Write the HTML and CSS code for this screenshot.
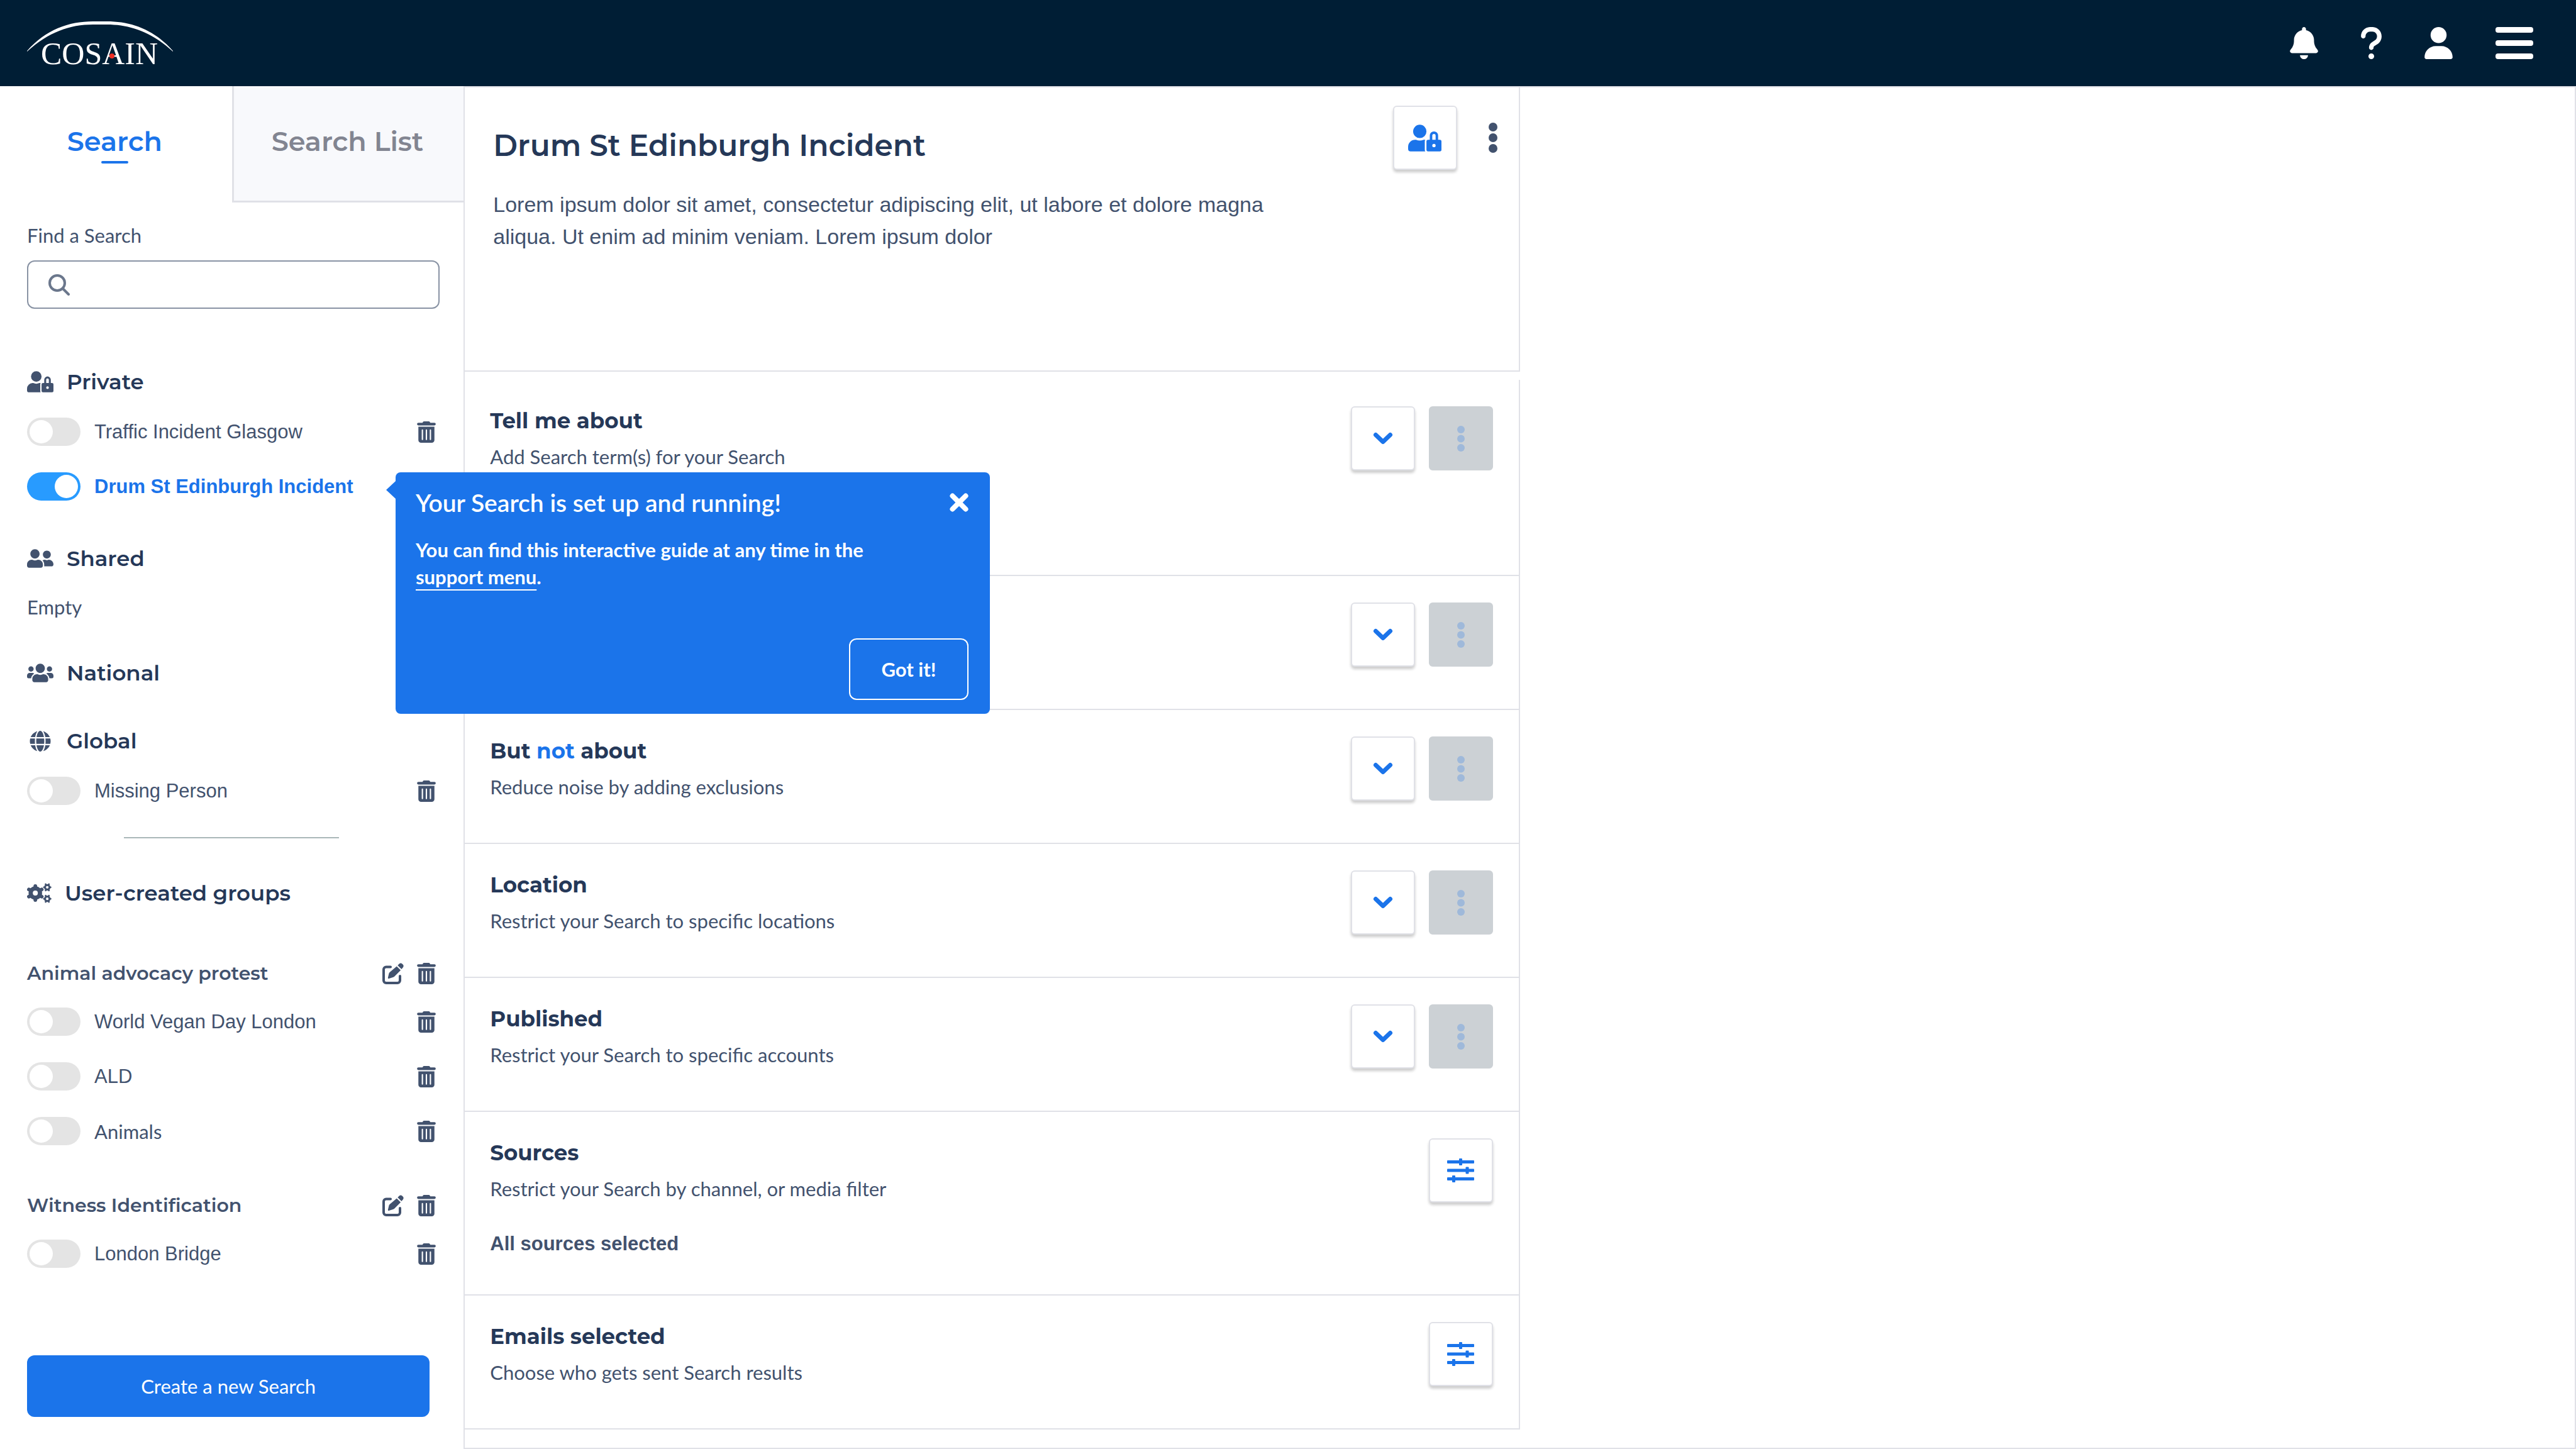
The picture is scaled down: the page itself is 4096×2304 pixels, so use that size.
FILE: index.html
```html
<!DOCTYPE html>
<html lang="en">
<head>
<meta charset="utf-8">
<title>Cosain</title>
<link rel="stylesheet" href="styles.css">
</head>
<body>
<svg class="sprite" aria-hidden="true">
  <symbol id="bell" viewBox="0 0 448 512"><path d="M224 0c-17.7 0-32 14.3-32 32l0 19.2C119 66 64 130.6 64 208l0 18.8c0 47-17.3 92.4-48.5 127.6l-7.4 8.3c-8.400 9.400-10.400 22.900-5.300 34.400S19.400 416 32 416l384 0c12.600 0 24-7.400 29.200-18.900s3.100-25-5.300-34.400l-7.400-8.300C401.300 319.200 384 273.900 384 226.800l0-18.800c0-77.400-55-142-128-156.800L256 32c0-17.700-14.300-32-32-32zm45.300 493.300c12-12 18.700-28.300 18.700-45.300l-64 0-64 0c0 17 6.700 33.300 18.700 45.300s28.300 18.700 45.300 18.700s33.300-6.700 45.300-18.700z"/></symbol>
  <symbol id="question" viewBox="16 32 288 448"><path d="M80 160c0-35.300 28.700-64 64-64l32 0c35.300 0 64 28.700 64 64l0 3.600c0 21.800-11.100 42.100-29.400 53.800l-42.200 27.100c-25.200 16.200-40.400 44.100-40.400 74l0 1.400c0 17.700 14.300 32 32 32s32-14.300 32-32l0-1.400c0-8.200 4.200-15.800 11-20.200l42.200-27.100c36.600-23.600 58.800-64.100 58.800-107.700l0-3.600c0-70.700-57.300-128-128-128l-32 0C73.300 32 16 89.300 16 160c0 17.700 14.300 32 32 32s32-14.300 32-32zm80 320a40 40 0 1 0 0-80 40 40 0 1 0 0 80z"/></symbol>
  <symbol id="user" viewBox="0 0 448 512"><path d="M224 256A128 128 0 1 0 224 0a128 128 0 1 0 0 256zm-45.700 48C79.800 304 0 383.800 0 482.300C0 498.700 13.300 512 29.700 512l388.600 0c16.400 0 29.700-13.300 29.700-29.700C448 383.800 368.200 304 269.700 304l-91.400 0z"/></symbol>
  <symbol id="menu" viewBox="0 0 60 51"><rect width="60" height="9" rx="4"/><rect y="21" width="60" height="9" rx="4"/><rect y="42" width="60" height="9" rx="4"/></symbol>
  <symbol id="search" viewBox="0 0 34 34"><g fill="none" stroke="currentColor" stroke-width="4" stroke-linecap="round"><circle cx="14" cy="14" r="12"/><path d="M23 23l9 9"/></g></symbol>
  <symbol id="user-lock" viewBox="0 0 640 512"><path d="M224 256A128 128 0 1 0 96 128a128 128 0 0 0 128 128zm96 64a63.080 63.080 0 0 1 8.100-30.500c-4.800-.5-9.500-1.500-14.500-1.500h-16.700a174.080 174.080 0 0 1-145.800 0h-16.700A134.430 134.430 0 0 0 0 422.400V464a48 48 0 0 0 48 48h280.900a63.540 63.540 0 0 1-8.900-32zm288-32h-32v-80a80 80 0 0 0-160 0v80h-32a32 32 0 0 0-32 32v160a32 32 0 0 0 32 32h224a32 32 0 0 0 32-32V320a32 32 0 0 0-32-32zM496 432a32 32 0 1 1 32-32 32 32 0 0 1-32 32zm32-144h-64v-80a32 32 0 0 1 64 0z"/></symbol>
  <symbol id="friends" viewBox="0 32 640 448"><path d="M192 256c61.900 0 112-50.100 112-112S253.900 32 192 32 80 82.100 80 144s50.100 112 112 112zm76.800 32h-8.300c-20.800 10-43.900 16-68.500 16s-47.600-6-68.500-16h-8.300C51.600 288 0 339.600 0 403.200V432c0 26.500 21.500 48 48 48h288c26.500 0 48-21.500 48-48v-28.800c0-63.600-51.600-115.200-115.200-115.200zM480 256c53 0 96-43 96-96s-43-96-96-96-96 43-96 96 43 96 96 96zm48 32h-3.800c-13.900 4.800-28.600 8-44.200 8s-30.300-3.200-44.200-8H432c-20.400 0-39.200 5.900-55.700 15.400 24.400 26.300 39.700 61.200 39.700 99.800v38.400c0 2.200-.5 4.300-.6 6.400H592c26.500 0 48-21.500 48-48 0-61.900-50.100-112-112-112z"/></symbol>
  <symbol id="users" viewBox="0 32 640 448"><path d="M96 224c35.300 0 64-28.700 64-64s-28.700-64-64-64-64 28.700-64 64 28.700 64 64 64zm448 0c35.300 0 64-28.700 64-64s-28.700-64-64-64-64 28.700-64 64 28.700 64 64 64zm32 32h-64c-17.600 0-33.500 7.100-45.100 18.600 40.300 22.100 68.900 62 75.100 109.400h66c17.700 0 32-14.300 32-32v-32c0-35.300-28.700-64-64-64zm-256 0c61.900 0 112-50.100 112-112S381.900 32 320 32 208 82.100 208 144s50.100 112 112 112zm76.800 32h-8.300c-20.800 10-43.900 16-68.500 16s-47.600-6-68.500-16h-8.300C179.600 288 128 339.600 128 403.200V432c0 26.500 21.500 48 48 48h288c26.500 0 48-21.500 48-48v-28.800c0-63.600-51.600-115.200-115.200-115.200zm-223.700-13.400C161.500 263.100 145.600 256 128 256H64c-35.300 0-64 28.700-64 64v32c0 17.700 14.300 32 32 32h65.900c6.300-47.400 34.900-87.300 75.200-109.400z"/></symbol>
  <symbol id="globe" viewBox="0 8 496 496"><path d="M336.500 160C322 70.700 287.800 8 248 8s-74 62.700-88.500 152h177zM152 256c0 22.200 1.200 43.500 3.300 64h185.300c2.100-20.500 3.300-41.800 3.300-64s-1.200-43.500-3.300-64H155.300c-2.100 20.500-3.300 41.800-3.300 64zm324.700-96c-28.600-67.900-86.500-120.400-158-141.600 24.400 33.800 41.200 84.700 50 141.600h108zM177.200 18.400C105.800 39.600 47.800 92.100 19.300 160h108c8.700-56.900 25.500-107.800 49.900-141.600zM487.400 192H372.700c2.100 21 3.300 42.500 3.300 64s-1.200 43-3.300 64h114.600c5.500-20.500 8.600-41.800 8.600-64s-3.100-43.500-8.500-64zM120 256c0-21.500 1.200-43 3.300-64H8.600C3.200 212.500 0 233.800 0 256s3.200 43.500 8.600 64h114.600c-2-21-3.200-42.500-3.200-64zm39.500 96c14.500 89.300 48.700 152 88.500 152s74-62.700 88.500-152h-177zm159.300 141.600c71.400-21.200 129.400-73.700 158-141.600h-108c-8.800 56.900-25.600 107.800-50 141.600zM19.300 352c28.600 67.900 86.500 120.400 158 141.600-24.400-33.800-41.200-84.700-50-141.600h-108z"/></symbol>
  <symbol id="gears" viewBox="0 0 37 30">
    <g fill="none" stroke="currentColor" stroke-linecap="round">
      <circle cx="12.500" cy="15" r="7" stroke-width="6.400"/>
      <path stroke-width="5.500" d="M12.500 6.500V4.500M12.500 23.500v2M5 10.800l-2.200-1.200M20 10.800l2.200-1.200M5 19.200l-2.200 1.200M20 19.200l2.200 1.200"/>
      <circle cx="30.500" cy="6.300" r="3.400" stroke-width="2.900"/>
      <path stroke-width="2.600" d="M28.500 2.600l-.5-1M32.500 2.600l.5-1M28.500 10l-.5 1M32.500 10l.5 1M26.500 6.300h-1M34.500 6.300h1"/>
      <circle cx="30.500" cy="23.700" r="3.400" stroke-width="2.900"/>
      <path stroke-width="2.600" d="M28.500 20l-.5-1M32.500 20l.5-1M28.500 27.400l-.5 1M32.500 27.400l.5 1M26.500 23.700h-1M34.500 23.700h1"/>
    </g>
  </symbol>
  <symbol id="trash" viewBox="0 0 448 512"><path d="M32 448a64 64 0 0 0 64 64h256a64 64 0 0 0 64-64V128H32zm272-240a16 16 0 0 1 32 0v224a16 16 0 0 1-32 0zm-96 0a16 16 0 0 1 32 0v224a16 16 0 0 1-32 0zm-96 0a16 16 0 0 1 32 0v224a16 16 0 0 1-32 0zM416 32H318l-9.400-15A36 36 0 0 0 281 0H167a36 36 0 0 0-27.600 17L130 32H32a32 32 0 0 0 0 64h384a32 32 0 0 0 0-64z"/></symbol>
  <symbol id="edit" viewBox="0 0 34 34"><path fill="none" stroke="currentColor" stroke-width="4" stroke-linecap="round" d="M13 6.500H6a4 4 0 0 0-4 4V28a4 4 0 0 0 4 4h18a4 4 0 0 0 4-4v-7"/><path d="M22.800 5.600l6.300 6.200-10 10c-.7.7-1.500 1-2.400 1.200l-6.300 1.900c-1.100.2-1.700-.4-1.500-1.500l1.400-6c.2-1 .6-1.600 1.300-2.300zM24.300 4.100l2.500-2.500c1.300-1.500 3.300-1.500 4.600-.2l1.200 1.200c1.400 1.400 1.400 3.300.2 4.600l-2.400 2.700z"/></symbol>
  <symbol id="dots" viewBox="0 0 14 48"><circle cx="7" cy="7" r="7"/><circle cx="7" cy="24" r="7"/><circle cx="7" cy="41" r="7"/></symbol>
  <symbol id="chevron" viewBox="0 0 32 21"><path fill="none" stroke="currentColor" stroke-width="7" stroke-linecap="round" stroke-linejoin="round" d="M4.500 4.500L16 15.500 27.500 4.500"/></symbol>
  <symbol id="sliders" viewBox="0 0 43 38"><rect y="3" width="43" height="5" rx="1"/><rect x="19" width="5" height="11" rx="1"/><rect y="16.500" width="43" height="5" rx="1"/><rect x="29.500" y="13.500" width="5" height="11" rx="1"/><rect y="30" width="43" height="5" rx="1"/><rect x="8" y="27" width="5" height="11" rx="1"/></symbol>
  <symbol id="close" viewBox="0 0 30 30"><path fill="none" stroke="currentColor" stroke-width="8" stroke-linecap="round" d="M4.500 4.500l21 21M25.500 4.500l-21 21"/></symbol>
</svg>

<header class="topbar">
  <a class="logo" href="#" aria-label="Cosain home">
    <svg width="232" height="96" viewBox="0 0 232 96">
      <path fill="#fff" d="M0 60C30 26 66 13 105 13h22c39 0 75 13 105 47v1C198 30 164 18 127 18h-22C68 18 34 30 0 61z"/>
      <text class="logo-text" x="22" y="81">COSAIN</text>
      <circle cx="135" cy="68" r="4" fill="#ee2e24"/>
    </svg>
  </a>
  <nav class="topbar-actions">
    <button class="icon-btn" aria-label="Notifications"><svg width="45" height="51"><use href="#bell"/></svg></button>
    <button class="icon-btn" aria-label="Help"><svg width="33" height="51"><use href="#question"/></svg></button>
    <button class="icon-btn" aria-label="Account"><svg width="45" height="51"><use href="#user"/></svg></button>
    <button class="icon-btn" aria-label="Menu"><svg width="60" height="51"><use href="#menu"/></svg></button>
  </nav>
</header>

<div class="layout">
  <aside class="sidebar">
    <div class="tabs" role="tablist">
      <button class="tab tab-active" role="tab" aria-selected="true">Search</button>
      <button class="tab" role="tab" aria-selected="false">Search List</button>
    </div>
    <div class="sidebar-body">
      <label class="find-label" for="find">Find a Search</label>
      <div class="find-box">
        <svg width="34" height="34"><use href="#search"/></svg>
        <input id="find" class="find-input" type="text">
      </div>

      <section class="group group-first">
        <h2 class="group-title"><svg width="42" height="34"><use href="#user-lock"/></svg>Private</h2>
        <ul class="items">
          <li class="item"><input class="toggle" type="checkbox" id="s1"><label for="s1">Traffic Incident Glasgow</label><button class="icon-btn" aria-label="Delete"><svg width="30" height="34"><use href="#trash"/></svg></button></li>
          <li class="item item-active"><input class="toggle" type="checkbox" id="s2" checked><label for="s2">Drum St Edinburgh Incident</label>
            <div class="guide" role="dialog" aria-labelledby="guide-title">
              <div class="guide-head">
                <h3 class="guide-title" id="guide-title">Your Search is set up and running!</h3>
                <button class="icon-btn" aria-label="Close"><svg width="30" height="30"><use href="#close"/></svg></button>
              </div>
              <p class="guide-text">You can find this interactive guide at any time in the <a class="guide-link" href="#">support menu</a>.</p>
              <button class="guide-btn">Got it!</button>
            </div>
          </li>
        </ul>
      </section>
      <section class="group group-shared">
        <h2 class="group-title"><svg width="42" height="30"><use href="#friends"/></svg>Shared</h2>
        <p class="empty">Empty</p>
      </section>
      <section class="group">
        <h2 class="group-title"><svg width="42" height="30"><use href="#users"/></svg>National</h2>
      </section>
      <section class="group">
        <h2 class="group-title"><svg width="42" height="33"><use href="#globe"/></svg>Global</h2>
        <ul class="items">
          <li class="item"><input class="toggle" type="checkbox" id="s3"><label for="s3">Missing Person</label><button class="icon-btn" aria-label="Delete"><svg width="30" height="34"><use href="#trash"/></svg></button></li>
        </ul>
      </section>
      <hr class="divider">
      <section class="group">
        <h2 class="group-title"><svg width="39" height="32"><use href="#gears"/></svg>User-created groups</h2>
        <div class="subgroup subgroup-first">
          <div class="subgroup-head"><h3 class="subgroup-title">Animal advocacy protest</h3><button class="icon-btn" aria-label="Edit"><svg width="34" height="34"><use href="#edit"/></svg></button><button class="icon-btn" aria-label="Delete"><svg width="30" height="34"><use href="#trash"/></svg></button></div>
          <ul class="items">
            <li class="item"><input class="toggle" type="checkbox" id="s4"><label for="s4">World Vegan Day London</label><button class="icon-btn" aria-label="Delete"><svg width="30" height="34"><use href="#trash"/></svg></button></li>
            <li class="item"><input class="toggle" type="checkbox" id="s5"><label for="s5">ALD</label><button class="icon-btn" aria-label="Delete"><svg width="30" height="34"><use href="#trash"/></svg></button></li>
            <li class="item"><input class="toggle" type="checkbox" id="s6"><label for="s6" class="lato">Animals</label><button class="icon-btn" aria-label="Delete"><svg width="30" height="34"><use href="#trash"/></svg></button></li>
          </ul>
        </div>
        <div class="subgroup">
          <div class="subgroup-head"><h3 class="subgroup-title">Witness Identification</h3><button class="icon-btn" aria-label="Edit"><svg width="34" height="34"><use href="#edit"/></svg></button><button class="icon-btn" aria-label="Delete"><svg width="30" height="34"><use href="#trash"/></svg></button></div>
          <ul class="items">
            <li class="item"><input class="toggle" type="checkbox" id="s7"><label for="s7">London Bridge</label><button class="icon-btn" aria-label="Delete"><svg width="30" height="34"><use href="#trash"/></svg></button></li>
          </ul>
        </div>
      </section>
      <button class="create-btn">Create a new Search</button>
    </div>
  </aside>

  <main class="main">
    <div class="panel">
      <section class="summary">
        <div class="summary-text">
          <h1 class="summary-title">Drum St Edinburgh Incident</h1>
          <p class="summary-desc">Lorem ipsum dolor sit amet, consectetur adipiscing elit, ut labore et dolore magna aliqua. Ut enim ad minim veniam. Lorem ipsum dolor</p>
        </div>
        <button class="card-btn" aria-label="Privacy"><svg width="53" height="43"><use href="#user-lock"/></svg></button>
        <button class="icon-btn summary-more" aria-label="More"><svg width="14" height="50"><use href="#dots"/></svg></button>
      </section>

      <div class="rows">
        <section class="row row-tall">
          <div class="row-text"><h2 class="row-title">Tell me about</h2><p class="row-desc">Add Search term(s) for your Search</p></div>
          <button class="card-btn" aria-label="Expand"><svg width="32" height="21"><use href="#chevron"/></svg></button>
          <button class="card-btn" aria-label="More" disabled><svg width="12" height="41"><use href="#dots"/></svg></button>
        </section>
        <section class="row">
          <div class="row-text"></div>
          <button class="card-btn" aria-label="Expand"><svg width="32" height="21"><use href="#chevron"/></svg></button>
          <button class="card-btn" aria-label="More" disabled><svg width="12" height="41"><use href="#dots"/></svg></button>
        </section>
        <section class="row">
          <div class="row-text"><h2 class="row-title">But <span class="accent">not</span> about</h2><p class="row-desc">Reduce noise by adding exclusions</p></div>
          <button class="card-btn" aria-label="Expand"><svg width="32" height="21"><use href="#chevron"/></svg></button>
          <button class="card-btn" aria-label="More" disabled><svg width="12" height="41"><use href="#dots"/></svg></button>
        </section>
        <section class="row">
          <div class="row-text"><h2 class="row-title">Location</h2><p class="row-desc">Restrict your Search to specific locations</p></div>
          <button class="card-btn" aria-label="Expand"><svg width="32" height="21"><use href="#chevron"/></svg></button>
          <button class="card-btn" aria-label="More" disabled><svg width="12" height="41"><use href="#dots"/></svg></button>
        </section>
        <section class="row">
          <div class="row-text"><h2 class="row-title">Published</h2><p class="row-desc">Restrict your Search to specific accounts</p></div>
          <button class="card-btn" aria-label="Expand"><svg width="32" height="21"><use href="#chevron"/></svg></button>
          <button class="card-btn" aria-label="More" disabled><svg width="12" height="41"><use href="#dots"/></svg></button>
        </section>
        <section class="row row-sources">
          <div class="row-text"><h2 class="row-title">Sources</h2><p class="row-desc">Restrict your Search by channel, or media filter</p><p class="row-value">All sources selected</p></div>
          <button class="card-btn" aria-label="Source settings"><svg width="43" height="38"><use href="#sliders"/></svg></button>
        </section>
        <section class="row">
          <div class="row-text"><h2 class="row-title">Emails selected</h2><p class="row-desc">Choose who gets sent Search results</p></div>
          <button class="card-btn" aria-label="Email settings"><svg width="43" height="38"><use href="#sliders"/></svg></button>
        </section>
      </div>
    </div>
  </main>
</div>
</body>
</html>
```
FILE: styles.css
```css
:root {
  --navy: #001e35;
  --ink: #253858;
  --slate: #42526e;
  --blue: #1b74ea;
  --line: #e0e1e7;
  --heading: Montserrat, Inter, sans-serif;
  --body: Lato, sans-serif;
  --plain: "Liberation Sans", Arial, sans-serif;
}

* { box-sizing: border-box; }

body {
  margin: 0;
  min-height: 100vh;
  display: flex;
  flex-direction: column;
  background: #fff;
  color: var(--slate);
  font: 31px/36px var(--body);
}

h1, h2, h3, p, ul { margin: 0; padding: 0; }
ul { list-style: none; }
svg { display: block; fill: currentColor; flex: none; }
button { font: inherit; color: inherit; cursor: pointer; }
.sprite { position: absolute; width: 0; height: 0; }

.icon-btn {
  flex: none;
  padding: 0;
  border: 0;
  background: none;
}

/* Top bar */
.topbar {
  height: 137px;
  flex: none;
  display: flex;
  align-items: center;
  justify-content: space-between;
  padding: 0 68px 0 43px;
  background: var(--navy);
  color: #fff;
}
.logo-text {
  font: 50px "Liberation Serif", serif;
  fill: #fff;
}
.topbar-actions { display: flex; gap: 68px; }

.layout {
  flex: 1;
  display: grid;
  grid-template-columns: 18% 1fr;
}

/* Sidebar */
.sidebar { display: flex; flex-direction: column; }
.tabs { display: grid; grid-template-columns: 1fr 1fr; }
.tab {
  height: 185px;
  display: flex;
  flex-direction: column;
  align-items: center;
  gap: 5px;
  padding: 62px 4px 0 0;
  border: solid var(--line);
  border-width: 0 0 3px 3px;
  background: #f8f9fc;
  color: #828591;
  font: 600 43px/52px var(--heading);
}
.tab-active {
  border-width: 0;
  background: none;
  color: var(--blue);
}
.tab-active::after {
  content: "";
  width: 43px;
  height: 4px;
  border-radius: 2px;
  background: currentColor;
}
.sidebar-body {
  flex: 1;
  display: flex;
  flex-direction: column;
  padding: 34px 38px 51px 43px;
}
.find-label { margin-bottom: 22px; }
.find-box {
  display: flex;
  align-items: center;
  gap: 20px;
  height: 77px;
  padding: 0 32px;
  border: 2px solid #8993a4;
  border-radius: 12px;
  color: #6b778c;
}
.find-input {
  flex: 1;
  min-width: 0;
  border: 0;
  outline: 0;
  background: none;
  color: var(--slate);
  font: inherit;
}

.group { margin-top: 66px; }
.group-first { margin-top: 95px; }
.group-shared { margin-top: 71px; }
.group-title {
  display: flex;
  align-items: center;
  gap: 21px;
  color: var(--ink);
  font: 600 34px/42px var(--heading);
}
.group-title svg { color: var(--slate); }
.items {
  display: grid;
  gap: 42px;
  margin-top: 36px;
}
.item {
  position: relative;
  display: flex;
  align-items: center;
  gap: 22px;
  height: 45px;
  padding-right: 6px;
  font: 31px/36px var(--plain);
}
.item label { flex: 1; }
.item .lato { font: 31px/36px var(--body); }
.item-active label { color: var(--blue); font-weight: 700; }
.toggle {
  appearance: none;
  flex: none;
  width: 85px;
  height: 45px;
  margin: 0;
  padding: 4px;
  border-radius: 23px;
  background: #e4e4e4;
}
.toggle::before {
  content: "";
  display: block;
  width: 37px;
  height: 37px;
  border-radius: 50%;
  background: #fff;
}
.toggle:checked { background: #289bff; }
.toggle:checked::before { margin-left: auto; }
.empty { margin-top: 38px; }

.divider {
  width: 342px;
  height: 2px;
  margin: 51px auto 0 154px;
  border: 0;
  background: #a9b7b8;
}
.subgroup { margin-top: 78px; }
.subgroup-first { margin-top: 89px; }
.subgroup-head {
  display: flex;
  align-items: center;
  gap: 21px;
  padding-right: 6px;
}
.subgroup-title {
  flex: 1;
  font: 600 30px/36px var(--heading);
}
.create-btn {
  height: 98px;
  margin: auto 16px 0 0;
  border: 0;
  border-radius: 12px;
  background: var(--blue);
  color: #fff;
}

/* Guide pop-up */
.guide {
  position: absolute;
  top: 0;
  left: 586px;
  z-index: 1;
  width: 945px;
  height: 384px;
  display: flex;
  flex-direction: column;
  padding: 25px 34px 22px 32px;
  border-radius: 8px;
  background: var(--blue);
  color: #fff;
  font: 700 31px/43px var(--body);
}
.guide::before {
  content: "";
  position: absolute;
  top: 14px;
  left: -15px;
  border: solid transparent;
  border-width: 14px 15px 14px 0;
  border-right-color: var(--blue);
}
.guide-head {
  display: flex;
  align-items: center;
  justify-content: space-between;
}
.guide-title { font: 600 39px/46px var(--body); }
.guide-text { max-width: 780px; margin-top: 31px; }
.guide-link {
  color: inherit;
  text-decoration-thickness: 2px;
  text-underline-offset: 8px;
  text-decoration-skip-ink: none;
}
.guide-btn {
  align-self: flex-end;
  width: 190px;
  height: 98px;
  margin-top: auto;
  border: 2px solid #fff;
  border-radius: 12px;
  background: none;
}

/* Main */
.main {
  border: 2px solid var(--line);
  display: grid;
  grid-template-columns: 50% 1fr;
  align-items: start;
}
.summary {
  display: flex;
  align-items: flex-start;
  height: 452px;
  padding: 29px 34px 0 45px;
  border: solid var(--line);
  border-width: 0 2px 2px 0;
}
.summary-text { flex: 1; padding-top: 36px; }
.summary-title {
  color: var(--ink);
  font: 600 47px/56px var(--heading);
}
.summary-desc {
  max-width: 1260px;
  margin-top: 40px;
  font: 34px/51px var(--plain);
}
.summary-more { margin: 26px 0 0 50px; color: var(--slate); }

.rows { margin-top: 13px; border-right: 2px solid var(--line); }
.row {
  display: flex;
  align-items: flex-start;
  gap: 22px;
  min-height: 213px;
  padding: 42px 41px 0 40px;
  border-bottom: 2px solid var(--line);
}
.row-tall { min-height: 312px; }
.row-sources { min-height: 292px; }
.row-text { flex: 1; padding-top: 2px; }
.row-title {
  color: var(--ink);
  font: 700 34px/42px var(--heading);
}
.row-desc { margin-top: 18px; }
.row-value {
  margin-top: 52px;
  font: 700 31px/36px var(--plain);
}
.accent { color: var(--blue); }

.card-btn {
  flex: none;
  display: grid;
  place-items: center;
  width: 102px;
  height: 102px;
  padding: 0;
  border: 2px solid var(--line);
  border-radius: 6px;
  background: #fff;
  box-shadow: 0 4px 4px rgba(0, 0, 0, 0.2);
  color: var(--blue);
}
.card-btn:disabled {
  border-color: #ccd1d5;
  background: #ccd1d5;
  box-shadow: none;
  color: #9fb9da;
}
```
